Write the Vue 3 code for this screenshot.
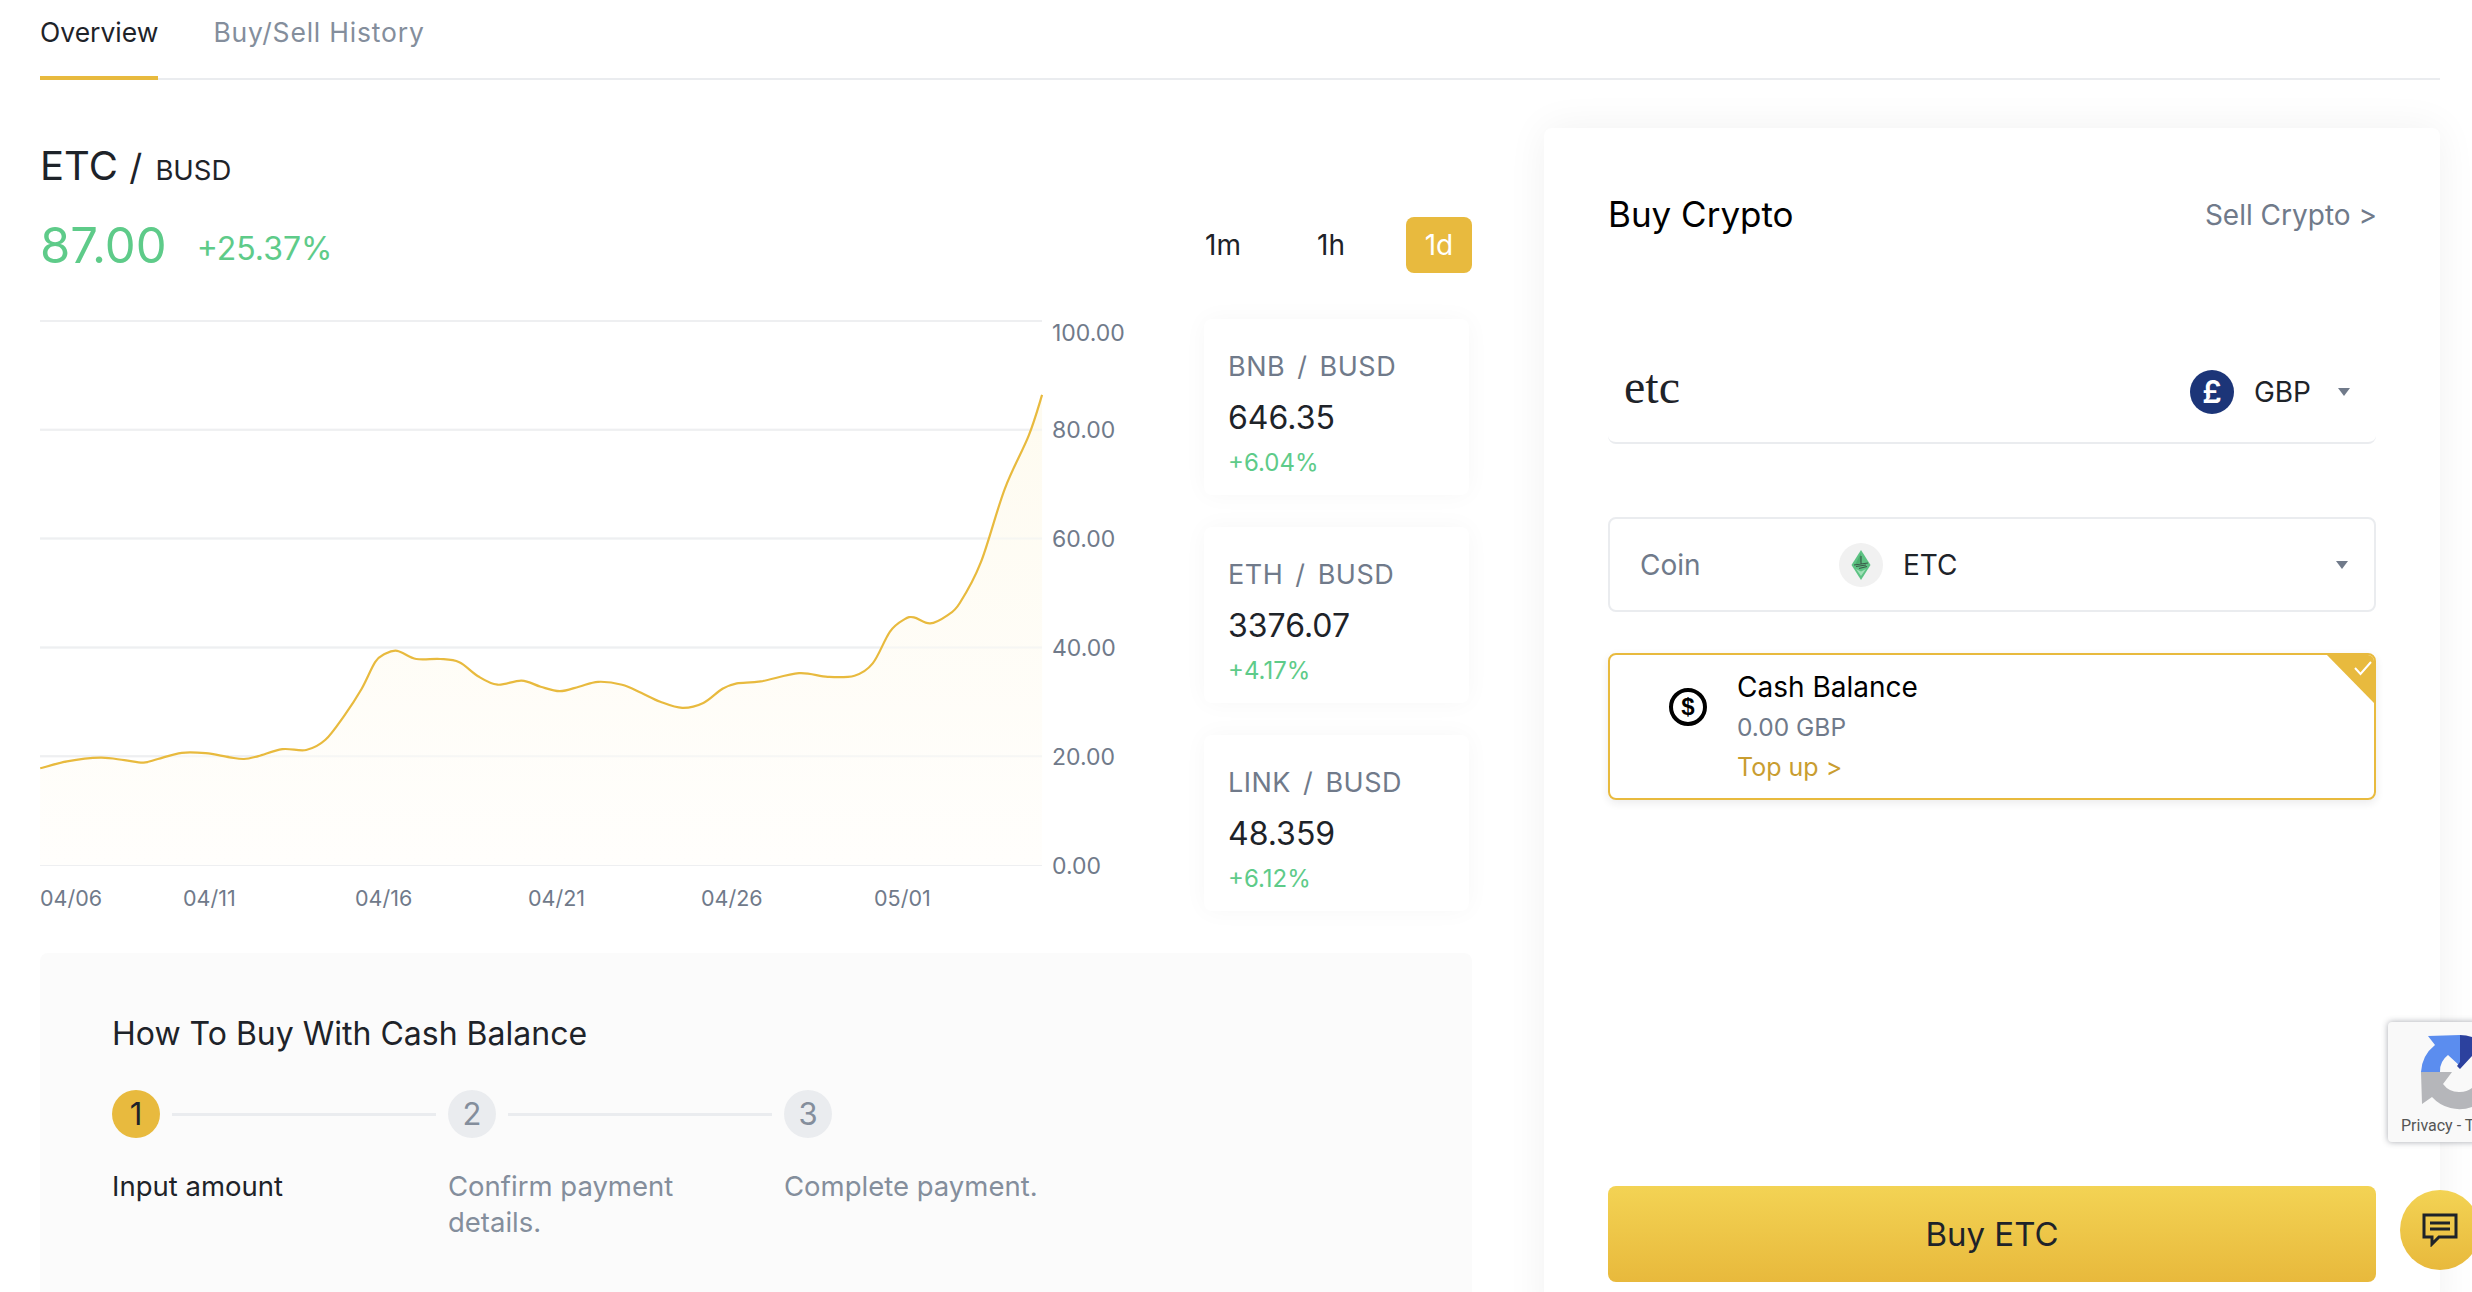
<script setup>
const raw = [[42,1145],[70,1128],[105,1119],[130,1125],[150,1131],[165,1122],[190,1107],[215,1108],[240,1118],[255,1122],[270,1115],[295,1098],[320,1100],[340,1075],[360,1015],[378,950],[392,885],[402,865],[415,857],[435,877],[460,877],[480,885],[500,920],[520,940],[545,930],[565,945],[585,956],[605,945],[625,933],[650,940],[670,960],[690,982],[713,997],[735,985],[755,950],[770,937],[795,932],[835,912],[865,921],[893,918],[912,888],[930,810],[945,780],[955,775],[972,790],[990,770],[1003,740],[1025,640],[1050,460],[1075,330],[1089,230]]
const pts = raw.map(([x, y]) => [x / 1.045 - 40, (y / 2.45) + 300 - 320 + 2])
function smooth(p) {
  let d = `M${p[0][0].toFixed(1)} ${p[0][1].toFixed(1)}`
  for (let i = 0; i < p.length - 1; i++) {
    const a = p[Math.max(i - 1, 0)], b = p[i], c = p[i + 1], e = p[Math.min(i + 2, p.length - 1)]
    const c1 = [b[0] + (c[0] - a[0]) / 6, b[1] + (c[1] - a[1]) / 6]
    const c2 = [c[0] - (e[0] - b[0]) / 6, c[1] - (e[1] - b[1]) / 6]
    d += `C${c1[0].toFixed(1)} ${c1[1].toFixed(1)} ${c2[0].toFixed(1)} ${c2[1].toFixed(1)} ${c[0].toFixed(1)} ${c[1].toFixed(1)}`
  }
  return d
}
const line = smooth(pts)
const area = `${line}L${pts[pts.length - 1][0].toFixed(1)} 546L0 546Z`
const grid = [2, 110.8, 219.6, 328.4, 437.2, 546]
const yLabels = [['100.00', 22], ['80.00', 119], ['60.00', 228], ['40.00', 337], ['20.00', 446], ['0.00', 555]]
const xLabels = [['04/06', 0], ['04/11', 143], ['04/16', 315], ['04/21', 488], ['04/26', 661], ['05/01', 834]]
const pairs = [
  { name: 'BNB / BUSD', price: '646.35', pct: '+6.04%' },
  { name: 'ETH / BUSD', price: '3376.07', pct: '+4.17%' },
  { name: 'LINK / BUSD', price: '48.359', pct: '+6.12%' }
]
const steps = [
  { n: 1, text: 'Input amount', active: true },
  { n: 2, text: 'Confirm payment details.', line: true },
  { n: 3, text: 'Complete payment.' }
]
</script>

<template>
  <div class="page">
    <nav class="tabs">
      <a class="tab tab-active">Overview</a>
      <a class="tab tab-wide">Buy/Sell History</a>
    </nav>

    <div class="main">
      <section class="left">
        <h1 class="pair-title">ETC <span class="slash">/</span> <small>BUSD</small></h1>
        <div class="price-row">
          <span class="price">87.00</span>
          <span class="change">+25.37%</span>
          <div class="ranges">
            <button class="range">1m</button>
            <button class="range">1h</button>
            <button class="range range-on">1d</button>
          </div>
        </div>

        <div class="chart-row">
          <svg class="chart" width="1150" height="593" viewBox="0 0 1150 593">
            <defs>
              <linearGradient id="fillArea" x1="0" y1="0" x2="0" y2="1">
                <stop offset="0" stop-color="#fefbf0" />
                <stop offset="1" stop-color="#fffefc" />
              </linearGradient>
            </defs>
            <line v-for="g in grid" :key="g" x1="0" x2="1002" :y1="g" :y2="g" stroke="#eeeff1" stroke-width="2" />
            <path :d="area" fill="url(#fillArea)" />
            <line v-for="g in grid.slice(1, 5)" :key="'o' + g" x1="0" x2="1002" :y1="g" :y2="g" stroke="#eeeff1" stroke-opacity=".5" stroke-width="2" />
            <path :d="line" fill="none" stroke="#e8ba3e" stroke-width="2.2" />
            <text v-for="l in yLabels" :key="l[0]" class="axis" x="1012" :y="l[1]">{{ l[0] }}</text>
            <text v-for="l in xLabels" :key="l[0]" class="axis axis-x" :x="l[1]" y="587">{{ l[0] }}</text>
          </svg>

          <div class="cards">
            <div v-for="p in pairs" :key="p.name" class="mini">
              <div class="mini-name">{{ p.name }}</div>
              <div class="mini-price">{{ p.price }}</div>
              <div class="mini-pct">{{ p.pct }}</div>
            </div>
          </div>
        </div>

        <div class="how">
          <h2 class="how-title">How To Buy With Cash Balance</h2>
          <div class="steps">
            <div v-for="(s, i) in steps" :key="s.n" class="step">
              <div class="step-head">
                <span class="dot" :class="{ 'dot-on': s.active }">{{ s.n }}</span>
                <span v-if="i < 2" class="connector"></span>
              </div>
              <p class="step-text" :class="{ 'step-text-on': s.active }">{{ s.text }}</p>
            </div>
          </div>
        </div>
      </section>

      <aside class="panel">
        <header class="panel-head">
          <h2 class="panel-title">Buy Crypto</h2>
          <a class="sell">Sell Crypto &gt;</a>
        </header>

        <div class="amount">
          <span class="amount-text">etc</span>
          <div class="currency">
            <span class="gbp">£</span>
            <span class="cur-name">GBP</span>
            <span class="caret"></span>
          </div>
        </div>

        <div class="coin">
          <span class="coin-label">Coin</span>
          <span class="coin-icon">
            <svg width="20" height="30" viewBox="0 0 20 30">
              <polygon points="10,0 19.5,15 10,30 0.5,15" fill="#5dc283" />
              <polygon points="10,3 10,12 4,15" fill="#4bb06f" />
              <path d="M10 6V14M3 15L17 13M5 16.5L15 15M8 18.5L16 16.5" stroke="#3c5a4a" stroke-width="1.2" fill="none" />
              <polygon points="10,26 5,19 10,21.5 15,19" fill="#9fe0b6" />
            </svg>
          </span>
          <span class="coin-name">ETC</span>
          <span class="caret coin-caret"></span>
        </div>

        <div class="cash">
          <span class="corner">
            <svg class="tick" width="20" height="16" viewBox="0 0 20 16"><path d="M2 8l5.5 6L18 2" fill="none" stroke="#fff" stroke-width="2" /></svg>
          </span>
          <span class="dollar"><b>$</b></span>
          <div class="cash-body">
            <div class="cash-name">Cash Balance</div>
            <div class="cash-val">0.00 GBP</div>
            <a class="topup">Top up &gt;</a>
          </div>
        </div>

        <button class="buy">Buy ETC</button>
      </aside>
    </div>

    <div class="captcha">
      <svg class="captcha-logo" width="84" height="92" viewBox="0 0 84 92">
        <path d="M72 13V44L60 33A20 20 0 0 0 52 50H33A37 37 0 0 1 47 23L40 14Z" fill="#5b8def" />
        <path d="M72 13A37 37 0 0 1 84 15V34L72 47L69 44L72 40Z" fill="#2c419e" />
        <path d="M33 50H64L55 62A20 20 0 0 0 72 70A20 20 0 0 0 84 66V85A37 37 0 0 1 44 75L34 82Z" fill="#b5b6ba" />
      </svg>
      <span class="captcha-text">Privacy - Terms</span>
    </div>

    <button class="chat" aria-label="chat">
      <svg width="36" height="34" viewBox="0 0 36 34">
        <path d="M2 2H34V24H17L10 31V24H2Z" fill="none" stroke="#1e2329" stroke-width="3" />
        <path d="M8 10H28M8 16H28" stroke="#1e2329" stroke-width="3" />
      </svg>
    </button>
  </div>
</template>

<style>
html, body { margin: 0; background: #fff; overflow: hidden; }
</style>

<style scoped>
.page {
  position: relative;
  width: 2472px;
  height: 1292px;
  overflow: hidden;
  background: #fff;
  font-family: Inter, "Liberation Sans", sans-serif;
  color: #1e2329;
  box-sizing: border-box;
  padding-left: 40px;
}
.tabs {
  width: 2400px;
  height: 80px;
  box-sizing: border-box;
  display: flex;
  gap: 55px;
  border-bottom: 2px solid #eaecef;
}
.tab {
  height: 80px;
  box-sizing: border-box;
  font-size: 26.5px;
  line-height: 64px;
  color: #848e9c;
}
.tab-wide { letter-spacing: .8px; }
.tab-active {
  color: #1e2329;
  border-bottom: 4px solid #e8ba3e;
}
.main { display: flex; gap: 72px; width: 2400px; }
.left { width: 1432px; flex: none; padding-top: 62px; }
.pair-title { margin: 0; font-size: 40px; font-weight: 400; line-height: 48px; }
.pair-title small { font-size: 27.5px; margin-left: 2px; }
.slash { font-size: 36px; }
.price-row { display: flex; align-items: center; height: 56px; margin-top: 23px; }
.price { font-size: 49px; color: #5ecb89; }
.change { font-size: 32px; color: #5ecb89; margin-left: 30px; margin-top: 6px; }
.ranges { margin-left: auto; display: flex; align-items: center; }
.range {
  border: 0;
  background: none;
  padding: 0;
  font: inherit;
  font-size: 28px;
  color: #1e2329;
  width: 66px;
  height: 56px;
  border-radius: 8px;
  margin-left: 42px;
}
.range-on { background: #e8ba3e; color: #fff; }
.chart-row { display: flex; margin-top: 46px; height: 593px; position: relative; }
.chart { flex: none; display: block; }
.axis { font-size: 23px; fill: #707a8a; }
.axis-x { font-size: 21.5px; }
.cards { margin-left: 14px; width: 265px; display: flex; flex-direction: column; gap: 32px; }
.mini {
  height: 176px;
  box-sizing: border-box;
  padding: 32px 0 0 24px;
  border-radius: 8px;
  background: #fff;
  box-shadow: 0 0 24px rgba(30, 35, 41, .035);
}
.mini-name { font-size: 27px; line-height: 32px; letter-spacing: .5px; word-spacing: 4px; color: #707a8a; }
.mini-price { font-size: 32px; line-height: 40px; margin-top: 15px; }
.mini-pct { font-size: 24px; line-height: 30px; margin-top: 10px; color: #5ecb89; }
.how {
  margin-top: 41px;
  height: 420px;
  box-sizing: border-box;
  padding: 61px 72px;
  background: #fbfbfb;
  border-radius: 8px;
}
.how-title { margin: 0; font-size: 32px; font-weight: 400; line-height: 40px; }
.steps { display: flex; margin-top: 36px; }
.step { width: 336px; flex: none; }
.step-head { display: flex; align-items: center; gap: 12px; }
.dot {
  width: 48px;
  height: 48px;
  flex: none;
  border-radius: 50%;
  background: #eaecef;
  color: #848e9c;
  font-size: 31px;
  line-height: 48px;
  text-align: center;
}
.dot-on { background: #e8ba3e; color: #1e2329; }
.connector { width: 264px; height: 3px; background: #eaecef; }
.step-text {
  margin: 30px 0 0;
  width: 290px;
  font-size: 27.5px;
  line-height: 36px;
  color: #848e9c;
}
.step-text-on { color: #1e2329; }
.panel {
  width: 896px;
  height: 1202px;
  flex: none;
  margin-top: 48px;
  box-sizing: border-box;
  padding: 66px 64px 48px;
  background: #fff;
  border-radius: 8px;
  box-shadow: 0 0 40px rgba(30, 35, 41, .06);
  display: flex;
  flex-direction: column;
}
.panel-head { display: flex; align-items: center; justify-content: space-between; height: 40px; }
.panel-title { margin: 0; font-size: 35px; font-weight: 400; color: #000; }
.sell { font-size: 28px; color: #707a8a; position: relative; left: 1px; top: 1px; }
.amount {
  margin-top: 108px;
  height: 102px;
  box-sizing: border-box;
  padding: 5px 26px 5px 16px;
  display: flex;
  align-items: center;
  border-bottom: 2px solid #eaecef;
  border-radius: 0 0 8px 8px;
}
.amount-text { font-family: "Liberation Serif", serif; font-size: 48px; color: #1e2329; position: relative; top: -6px; }
.currency { margin-left: auto; display: flex; align-items: center; }
.gbp {
  width: 44px;
  height: 44px;
  border-radius: 50%;
  background: #1c3578;
  color: #fff;
  font-size: 31px;
  font-weight: 600;
  line-height: 44px;
  text-align: center;
}
.cur-name { margin-left: 20px; font-size: 28px; }
.caret {
  width: 0;
  height: 0;
  margin-left: 27px;
  border-left: 6px solid transparent;
  border-right: 6px solid transparent;
  border-top: 8px solid #707a8a;
}
.coin {
  margin-top: 73px;
  height: 95px;
  box-sizing: border-box;
  border: 2px solid #eaecef;
  border-radius: 8px;
  display: flex;
  align-items: center;
  padding: 0 26px 0 30px;
}
.coin-label { width: 199px; font-size: 28px; color: #707a8a; }
.coin-icon {
  width: 44px;
  height: 44px;
  border-radius: 50%;
  background: #f1f1f1;
  display: flex;
  align-items: center;
  justify-content: center;
}
.coin-name { margin-left: 20px; font-size: 28px; }
.coin-caret { margin-left: auto; }
.cash {
  position: relative;
  margin-top: 41px;
  height: 147px;
  box-sizing: border-box;
  border: 2px solid #e8ba3e;
  border-radius: 8px;
  box-shadow: 0 3px 8px rgba(30, 35, 41, .09);
  display: flex;
  padding-left: 59px;
  overflow: hidden;
}
.corner {
  position: absolute;
  top: -2px;
  right: -2px;
  width: 51px;
  height: 52px;
  background: #e8ba3e;
  clip-path: polygon(0 0, 100% 0, 100% 100%);
}
.tick { position: absolute; top: 7px; right: 3px; }
.dollar {
  width: 38px;
  height: 38px;
  margin-top: 33px;
  box-sizing: border-box;
  border: 4px solid #000;
  border-radius: 50%;
  display: flex;
  align-items: center;
  justify-content: center;
  color: #000;
  font-family: "Liberation Sans", sans-serif;
  font-size: 24px;
}
.cash-body { margin-left: 30px; padding-top: 14px; }
.cash-name { font-size: 28px; line-height: 36px; color: #000; }
.cash-val { font-size: 24.5px; line-height: 32px; margin-top: 6px; color: #707a8a; }
.topup { display: block; font-size: 25px; line-height: 32px; margin-top: 8px; color: #c99d30; }
.buy {
  margin-top: auto;
  height: 96px;
  flex: none;
  border: 0;
  border-radius: 8px;
  background: linear-gradient(180deg, #f3d354, #e8b93c);
  font: inherit;
  font-size: 33px;
  color: #1e2329;
}
.captcha {
  position: absolute;
  left: 2388px;
  top: 1022px;
  width: 256px;
  height: 120px;
  background: #f9f9f9;
  border-radius: 4px;
  box-shadow: 0 0 6px rgba(60, 64, 80, .45);
}
.captcha-logo { position: absolute; left: 0; top: 0; }
.captcha-text {
  position: absolute;
  left: 13px;
  top: 94px;
  font-family: Roboto, sans-serif;
  font-size: 16px;
  line-height: 20px;
  color: #555;
  white-space: nowrap;
}
.chat {
  position: absolute;
  left: 2400px;
  top: 1190px;
  width: 80px;
  height: 80px;
  border: 0;
  padding: 0;
  border-radius: 50%;
  background: linear-gradient(180deg, #f3d354, #e8b93c);
  display: flex;
  align-items: center;
  justify-content: center;
}
</style>
